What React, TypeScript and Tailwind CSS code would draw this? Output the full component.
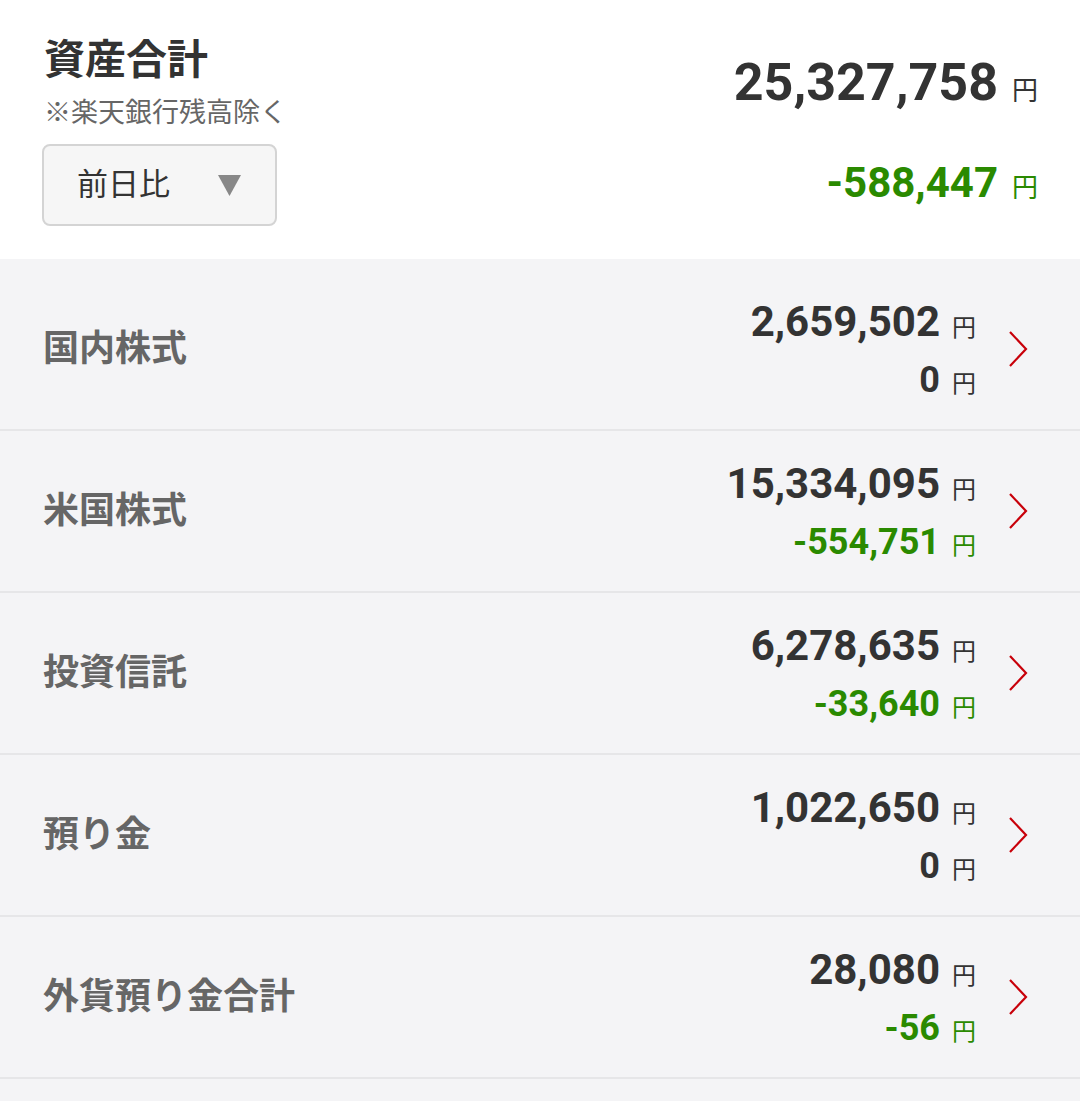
const rows = [
  { label: '国内株式', total: '2,659,502', diff: '0', down: false },
  { label: '米国株式', total: '15,334,095', diff: '-554,751', down: true },
  { label: '投資信託', total: '6,278,635', diff: '-33,640', down: true },
  { label: '預り金', total: '1,022,650', diff: '0', down: false },
  { label: '外貨預り金合計', total: '28,080', diff: '-56', down: true },
];

const font = "font-['Roboto','Noto_Sans_CJK_JP',sans-serif]";

const Chevron = () => (
  <svg width="20" height="36" viewBox="0 0 20 36" className="shrink-0">
    <path d="M2 1 L18 18 L2 35" fill="none" stroke="#c8000a" strokeWidth="2.2" />
  </svg>
);

const App = () => {
  return (
    <div className={`${font} flex min-h-[1101px] w-[1080px] flex-col bg-[#f4f4f6]`}>
      <header className="flex justify-between bg-white pt-[34px] pr-[42px] pb-[33px] pl-[42px]">
        <div className="flex flex-col">
          <h1 className="pl-[2px] text-[41px] leading-[52px] font-bold text-[#333]">資産合計</h1>
          <p className="mt-[10px] pl-[2px] text-[27px] leading-[34px] text-[#666]">※楽天銀行残高除く</p>
          <button
            type="button"
            className="mt-[14px] flex h-[82px] w-[235px] items-center justify-between rounded-lg border-2 border-[#d4d4d4] bg-[#f6f6f6] pr-[34px] pl-[33px]"
          >
            <span className="text-[31px] text-[#333]">前日比</span>
            <svg width="23" height="21" viewBox="0 0 23 21">
              <path d="M0 0 H23 L11.5 21 Z" fill="#888" />
            </svg>
          </button>
        </div>
        <div className="flex flex-col items-end pt-[17px]">
          <div className="flex items-baseline gap-[14px]">
            <span className="text-[52px] leading-[64px] font-bold text-[#333]">25,327,758</span>
            <span className="text-[26px] text-[#333]">円</span>
          </div>
          <div className="mt-[42px] flex items-baseline gap-[14px]">
            <span className="text-[42px] leading-[52px] font-bold text-[#2a8a00]">-588,447</span>
            <span className="text-[26px] text-[#2a8a00]">円</span>
          </div>
        </div>
      </header>

      <main className="flex flex-col pt-[10px]">
        {rows.map((row) => (
          <div
            key={row.label}
            className="flex h-[162px] items-center justify-between border-b-2 border-[#e6e6e8] pr-[52px] pl-[43px]"
          >
            <span className="text-[36px] font-bold text-[#666]">{row.label}</span>
            <div className="flex items-center gap-[32px]">
              <div className="flex flex-col items-end">
                <div className="flex items-baseline gap-[12px]">
                  <span className="text-[42px] leading-[52px] font-bold text-[#333]">{row.total}</span>
                  <span className="text-[24px] text-[#333]">円</span>
                </div>
                <div className="mt-[10px] flex items-baseline gap-[12px]">
                  <span
                    className={`text-[36px] leading-[44px] font-bold ${row.down ? 'text-[#2a8a00]' : 'text-[#333]'}`}
                  >
                    {row.diff}
                  </span>
                  <span className={`text-[24px] ${row.down ? 'text-[#2a8a00]' : 'text-[#333]'}`}>円</span>
                </div>
              </div>
              <Chevron />
            </div>
          </div>
        ))}
      </main>
    </div>
  );
};

export default App;
